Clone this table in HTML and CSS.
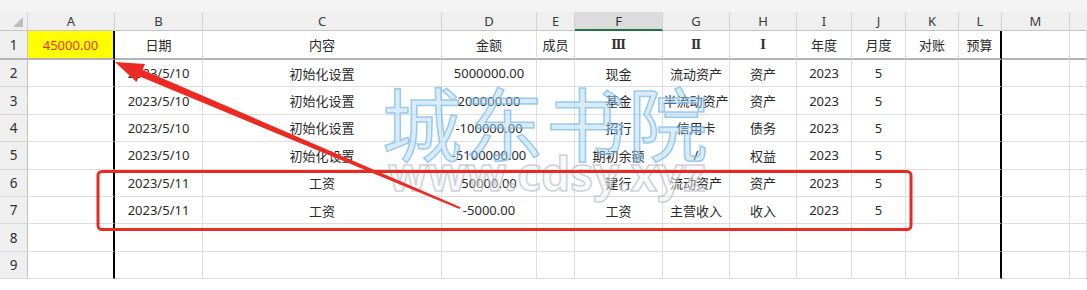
FILE: index.html
```html
<!DOCTYPE html>
<html lang="zh-CN">
<head>
<meta charset="utf-8">
<title>Sheet</title>
<link rel="stylesheet" href="styles.css">
</head>
<body>
<div class="page">
  <div class="topbar"></div>
  <div class="sheet">
    <div class="ch corner"><span class="tri"></span></div>
    <div class="ch">A</div><div class="ch">B</div><div class="ch">C</div><div class="ch">D</div><div class="ch">E</div>
    <div class="ch sel">F</div><div class="ch">G</div><div class="ch">H</div><div class="ch">I</div><div class="ch">J</div>
    <div class="ch">K</div><div class="ch">L</div><div class="ch">M</div><div class="ch last"></div>

    <div class="rh r1">1</div>
    <div class="c r1 thick total">45000.00</div><div class="c r1">日期</div><div class="c r1">内容</div><div class="c r1">金额</div><div class="c r1">成员</div>
    <div class="c r1 roman">Ⅲ</div><div class="c r1 roman">Ⅱ</div><div class="c r1 roman">Ⅰ</div><div class="c r1">年度</div><div class="c r1">月度</div>
    <div class="c r1">对账</div><div class="c r1 thick">预算</div><div class="c r1"></div><div class="c r1"></div>

    <div class="rh">2</div>
    <div class="c thick"></div><div class="c">2023/5/10</div><div class="c">初始化设置</div><div class="c">5000000.00</div><div class="c"></div>
    <div class="c">现金</div><div class="c">流动资产</div><div class="c">资产</div><div class="c">2023</div><div class="c">5</div>
    <div class="c"></div><div class="c thick"></div><div class="c"></div><div class="c"></div>

    <div class="rh">3</div>
    <div class="c thick"></div><div class="c">2023/5/10</div><div class="c">初始化设置</div><div class="c">200000.00</div><div class="c"></div>
    <div class="c">基金</div><div class="c">半流动资产</div><div class="c">资产</div><div class="c">2023</div><div class="c">5</div>
    <div class="c"></div><div class="c thick"></div><div class="c"></div><div class="c"></div>

    <div class="rh">4</div>
    <div class="c thick"></div><div class="c">2023/5/10</div><div class="c">初始化设置</div><div class="c">-100000.00</div><div class="c"></div>
    <div class="c">招行</div><div class="c">信用卡</div><div class="c">债务</div><div class="c">2023</div><div class="c">5</div>
    <div class="c"></div><div class="c thick"></div><div class="c"></div><div class="c"></div>

    <div class="rh">5</div>
    <div class="c thick"></div><div class="c">2023/5/10</div><div class="c">初始化设置</div><div class="c">-5100000.00</div><div class="c"></div>
    <div class="c">期初余额</div><div class="c">/</div><div class="c">权益</div><div class="c">2023</div><div class="c">5</div>
    <div class="c"></div><div class="c thick"></div><div class="c"></div><div class="c"></div>

    <div class="rh">6</div>
    <div class="c thick"></div><div class="c">2023/5/11</div><div class="c">工资</div><div class="c">50000.00</div><div class="c"></div>
    <div class="c">建行</div><div class="c">流动资产</div><div class="c">资产</div><div class="c">2023</div><div class="c">5</div>
    <div class="c"></div><div class="c thick"></div><div class="c"></div><div class="c"></div>

    <div class="rh">7</div>
    <div class="c thick"></div><div class="c">2023/5/11</div><div class="c">工资</div><div class="c">-5000.00</div><div class="c"></div>
    <div class="c">工资</div><div class="c">主营收入</div><div class="c">收入</div><div class="c">2023</div><div class="c">5</div>
    <div class="c"></div><div class="c thick"></div><div class="c"></div><div class="c"></div>

    <div class="rh">8</div>
    <div class="c thick"></div><div class="c"></div><div class="c"></div><div class="c"></div><div class="c"></div>
    <div class="c"></div><div class="c"></div><div class="c"></div><div class="c"></div><div class="c"></div>
    <div class="c"></div><div class="c thick"></div><div class="c"></div><div class="c"></div>

    <div class="rh">9</div>
    <div class="c thick"></div><div class="c"></div><div class="c"></div><div class="c"></div><div class="c"></div>
    <div class="c"></div><div class="c"></div><div class="c"></div><div class="c"></div><div class="c"></div>
    <div class="c"></div><div class="c thick"></div><div class="c"></div><div class="c"></div>
  </div>

  <div class="wm-cn">城东书院</div>
  <div class="wm-en">www.cdsy.xyz</div>

  <svg class="marks" width="1087" height="290" viewBox="0 0 1087 290" xmlns="http://www.w3.org/2000/svg">
    <rect x="98" y="171.5" width="813" height="58" rx="4" ry="4" fill="none" stroke="#e82a24" stroke-width="3"/>
    <polygon fill="#ec2a22" points="115,62 145,64 142.5,69.8 460.6,207.3 459.4,209 139.2,76.3 136.5,82"/>
  </svg>
</div>
</body>
</html>
```

FILE: styles.css
```css
html, body {
  margin: 0;
  padding: 0;
  background: #ffffff;
}

.page {
  position: relative;
  width: 1087px;
  height: 290px;
  overflow: hidden;
  font-family: "Noto Sans", "Noto Sans CJK SC", sans-serif;
  font-size: 13px;
  color: #2b2b2b;
}

.topbar {
  height: 12px;
  background: #f3f3f3;
}

.sheet {
  display: grid;
  grid-template-columns: 28px 87px 88px 239px 95px 38px 88px 67px 67px 55px 54px 53px 43px 68px 1fr;
  grid-template-rows: 19px 29px repeat(8, 27.4px);
}

.ch {
  box-sizing: border-box;
  background: #efefef;
  border-right: 1px solid #d2d2d2;
  border-bottom: 1px solid #c4c4c4;
  display: flex;
  align-items: center;
  justify-content: center;
  font-size: 13px;
  color: #3a3a3a;
}

.ch.sel {
  background: #dcdcdc;
  border-bottom: 2px solid #217346;
  color: #2f2f2f;
}

.ch.last {
  border-right: none;
}

.corner {
  position: relative;
}

.tri {
  position: absolute;
  right: 4px;
  bottom: 3px;
  width: 0;
  height: 0;
  border-left: 10px solid transparent;
  border-bottom: 10px solid #bdbdbd;
}

.rh {
  box-sizing: border-box;
  background: #efefef;
  border-right: 1px solid #c4c4c4;
  border-bottom: 1px solid #d6d6d6;
  display: flex;
  align-items: center;
  justify-content: center;
  font-size: 13.5px;
  color: #2e2e2e;
}

.c {
  box-sizing: border-box;
  border-right: 1px solid #dedede;
  border-bottom: 1px solid #dedede;
  display: flex;
  align-items: center;
  justify-content: center;
  white-space: nowrap;
  overflow: visible;
  color: #2b2b2b;
}

.roman {
  font-family: "DejaVu Serif", "Liberation Serif", serif;
  font-weight: 700;
  font-size: 12px;
  color: #333333;
}

.r1 {
  border-bottom: 2px solid #b4b4b4;
}

.rh.r1 {
  border-bottom: 2px solid #b4b4b4;
}

.thick {
  border-right: 2px solid #000000;
}

.total {
  background: #ffff00;
  color: #f0301c;
}

.wm-cn {
  position: absolute;
  left: 382px;
  top: 80px;
  font-family: "Noto Sans CJK SC", sans-serif;
  font-size: 80px;
  line-height: 1;
  letter-spacing: 2px;
  color: rgba(170, 212, 245, 0.45);
  -webkit-text-stroke: 1.5px rgba(110, 180, 235, 0.65);
  pointer-events: none;
}

.wm-en {
  position: absolute;
  left: 388px;
  top: 150px;
  font-family: "Noto Sans", sans-serif;
  font-weight: 700;
  font-size: 46px;
  line-height: 1;
  color: rgba(240, 242, 245, 0.45);
  -webkit-text-stroke: 1.5px rgba(160, 168, 178, 0.5);
  pointer-events: none;
}

.marks {
  position: absolute;
  left: 0;
  top: 0;
  pointer-events: none;
}
```
